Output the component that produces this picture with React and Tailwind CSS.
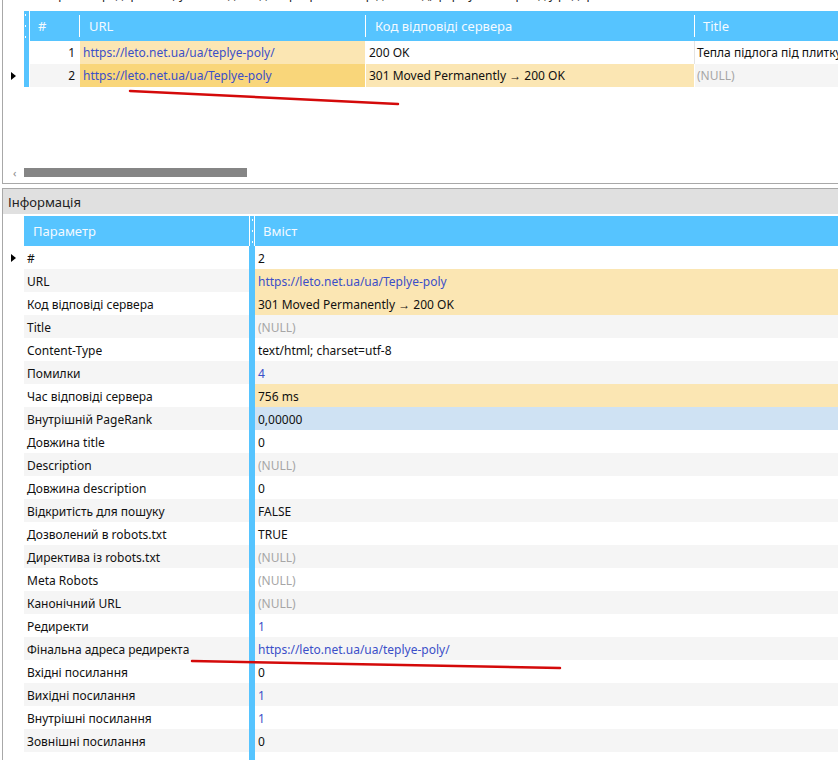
import React from "react";

const topCols = [
  { key: "num", w: "w-[50px]", label: "#", pl: "pl-[8px]" },
  { key: "url", w: "w-[286px]", label: "URL", pl: "pl-[9px]" },
  { key: "code", w: "w-[329px]", label: "Код відповіді сервера", pl: "pl-[9px]" },
];

const info = [
  { p: "#", v: "2" },
  { p: "URL", v: "https://leto.net.ua/ua/Teplye-poly", kind: "link", bg: "orange" },
  { p: "Код відповіді сервера", v: "301 Moved Permanently → 200 OK", bg: "orange" },
  { p: "Title", v: "(NULL)", kind: "null" },
  { p: "Content-Type", v: "text/html; charset=utf-8" },
  { p: "Помилки", v: "4", kind: "link" },
  { p: "Час відповіді сервера", v: "756 ms", bg: "orange" },
  { p: "Внутрішній PageRank", v: "0,00000", bg: "blue" },
  { p: "Довжина title", v: "0" },
  { p: "Description", v: "(NULL)", kind: "null" },
  { p: "Довжина description", v: "0" },
  { p: "Відкритість для пошуку", v: "FALSE" },
  { p: "Дозволений в robots.txt", v: "TRUE" },
  { p: "Директива із robots.txt", v: "(NULL)", kind: "null" },
  { p: "Meta Robots", v: "(NULL)", kind: "null" },
  { p: "Канонічний URL", v: "(NULL)", kind: "null" },
  { p: "Редиректи", v: "1", kind: "link" },
  { p: "Фінальна адреса редиректа", v: "https://leto.net.ua/ua/teplye-poly/", kind: "link" },
  { p: "Вхідні посилання", v: "0" },
  { p: "Вихідні посилання", v: "1", kind: "link" },
  { p: "Внутрішні посилання", v: "1", kind: "link" },
  { p: "Зовнішні посилання", v: "0" },
  { p: "Рівень вкладеності", v: "" },
];

const Arrow = () => (
  <svg width="5" height="8" viewBox="0 0 5 8">
    <polygon points="0,0 5,4 0,8" fill="#000" />
  </svg>
);

const Dots = () => (
  <div className="flex flex-col justify-between h-full py-[3px]">
    <span className="w-px h-[2px] bg-white" />
    <span className="w-px h-[2px] bg-white" />
    <span className="w-px h-[2px] bg-white" />
  </div>
);

const textColor = (kind) =>
  kind === "link" ? "text-[#3b4fc8]" : kind === "null" ? "text-[#a6a6a6]" : "text-[#111]";

export default function App() {
  return (
    <div className="relative w-[838px] h-[760px] overflow-hidden bg-white font-['Noto_Sans','Open_Sans',sans-serif] text-[12px] leading-none">
      {/* top grid panel */}
      <div className="ml-[2px] h-[184px] flex flex-col border-l border-b border-[#a8a8a8]">
        <div className="h-[2px] shrink-0 overflow-hidden">
          <p className="pl-[35px] -mt-[12px] text-[12px] leading-[13px] text-[#222] whitespace-nowrap">
            Сторінки з редиректом, у яких відповідь сервера 301 та рідний код, формуючи перехід у редирект
          </p>
        </div>
        <div className="h-[9px] shrink-0" />
        <div className="flex">
          <div className="w-[21px] shrink-0 flex flex-col">
            <div className="h-[30px]" />
            <div className="h-[23px]" />
            <div className="h-[23px] flex items-center pl-[8px]">
              <Arrow />
            </div>
          </div>
          <div className="flex-1 min-w-0 flex flex-col">
            {/* header */}
            <div className="h-[30px] flex bg-[#56c4ff] text-[13px] text-[#f4faff]">
              <div className="w-[6px] shrink-0 flex border-r border-white pl-[1px]">
                <Dots />
              </div>
              {topCols.map((c) => (
                <div key={c.key} className={`${c.w} shrink-0 flex items-center relative ${c.pl}`}>
                  {c.label}
                  <span className="absolute right-0 top-[4px] bottom-[4px] w-px bg-white" />
                </div>
              ))}
              <div className="flex-1 flex items-center pl-[8px]">Title</div>
            </div>
            {/* row 1 */}
            <div className="h-[23px] flex pt-px">
              <div className="w-[6px] shrink-0 -mt-px bg-[#56c4ff] border-r border-white" />
              <div className="w-[50px] shrink-0 flex items-center justify-end pr-[5px] text-[#111]">1</div>
              <div className="w-[286px] shrink-0 -mt-px pt-px flex items-center pl-[3px] bg-[#fbe6b3] border-r border-white text-[#3b4fc8]">
                https://leto.net.ua/ua/teplye-poly/
              </div>
              <div className="w-[329px] shrink-0 -mt-px pt-px flex items-center pl-[3px] border-r border-[#e4e4e4] text-[#111]">
                200 OK
              </div>
              <div className="flex-1 min-w-0 flex items-center pl-[2px] whitespace-nowrap overflow-hidden text-[#111]">
                Тепла підлога під плитку
              </div>
            </div>
            {/* row 2 */}
            <div className="h-[23px] flex">
              <div className="w-[6px] shrink-0 bg-[#56c4ff] border-r border-white" />
              <div className="w-[50px] shrink-0 pt-px flex items-center justify-end pr-[5px] bg-[#f5f5f5] text-[#111]">2</div>
              <div className="w-[286px] shrink-0 pt-px flex items-center pl-[3px] bg-[#f9d67a] border-r border-white text-[#3b4fc8]">
                https://leto.net.ua/ua/Teplye-poly
              </div>
              <div className="w-[329px] shrink-0 pt-px flex items-center pl-[3px] bg-[#fbe6b3] border-r border-white text-[#111]">
                301 Moved Permanently → 200 OK
              </div>
              <div className="flex-1 min-w-0 pt-px flex items-center pl-[2px] bg-[#f5f5f5] text-[#a6a6a6]">(NULL)</div>
            </div>
          </div>
        </div>
        <div className="flex-1" />
        {/* horizontal scrollbar */}
        <div className="h-[14px] mb-[4px] flex items-center shrink-0">
          <span className="w-[21px] shrink-0 pl-[10px] text-[11px] text-[#8a8a8a]">‹</span>
          <div className="w-[223px] h-[9px] bg-[#858585]" />
        </div>
      </div>

      {/* info panel */}
      <div className="ml-[2px] mt-[4px] border-l border-t border-[#a8a8a8]">
        <div className="h-[25px] bg-[#e0e0e0] flex items-center pl-[5px] pt-px text-[13px] text-[#222]">Інформація</div>
        <div className="h-[2px]" />
        <div className="flex">
          <div className="w-[21px] shrink-0 flex flex-col">
            <div className="h-[30px]" />
            <div className="h-[23px] flex items-center pl-[8px]">
              <Arrow />
            </div>
          </div>
          <div className="flex-1 min-w-0 flex flex-col">
            <div className="h-[30px] flex bg-[#56c4ff] text-[13px] text-[#f4faff]">
              <div className="w-[225px] shrink-0 flex items-center pl-[9px]">Параметр</div>
              <div className="w-[6px] shrink-0 flex justify-between">
                <span className="w-px bg-white" />
                <Dots />
                <span className="w-px bg-white" />
              </div>
              <div className="flex-1 flex items-center pl-[8px]">Вміст</div>
            </div>
            {info.map((r, i) => {
              const alt = i % 2 === 1 ? "bg-[#f5f5f5]" : "bg-white";
              const vbg =
                r.bg === "orange" ? "bg-[#fbe6b3]" : r.bg === "blue" ? "bg-[#cfe2f3]" : alt;
              return (
                <div key={r.p} className="h-[23px] flex shrink-0">
                  <div className={`w-[225px] shrink-0 pt-[2px] flex items-center pl-[3px] text-[#111] ${alt}`}>{r.p}</div>
                  <div className="w-[6px] shrink-0 bg-[#56c4ff]" />
                  <div className={`flex-1 min-w-0 pt-[2px] flex items-center pl-[3px] ${vbg} ${textColor(r.kind)}`}>{r.v}</div>
                </div>
              );
            })}
          </div>
        </div>
      </div>

      {/* red annotation strokes */}
      <svg className="absolute inset-0 pointer-events-none" width="838" height="760">
        <line x1="130" y1="91" x2="398" y2="104" stroke="#d40a0a" strokeWidth="2.5" strokeLinecap="round" />
        <line x1="192" y1="661" x2="560" y2="668" stroke="#d40a0a" strokeWidth="2.5" strokeLinecap="round" />
      </svg>
    </div>
  );
}
